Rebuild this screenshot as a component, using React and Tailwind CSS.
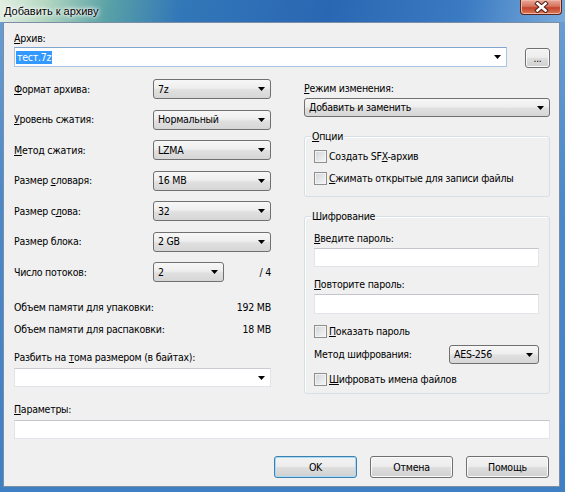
import React from "react";

function Arrow() {
  return (
    <svg width="7" height="4" viewBox="0 0 7 4" className="shrink-0">
      <path d="M0 0H7L3.5 4Z" fill="#000" />
    </svg>
  );
}

function Combo({ className = "", children }) {
  return (
    <div
      className={`flex items-center justify-between pl-[4px] pr-[5px] border border-[#707070] rounded-[3px] bg-[linear-gradient(#f7f7f7,#eeeeee_45%,#e0e0e0_55%,#d6d6d6)] leading-[13px] ${className}`}
    >
      <span>{children}</span>
      <Arrow />
    </div>
  );
}

function Check({ children }) {
  return (
    <div className="flex items-center h-[13px] gap-[2px]">
      <div className="w-[13px] h-[13px] shrink-0 border border-[#8e8f8f] bg-[linear-gradient(135deg,#d2d4d8,#f7f7f7)] shadow-[inset_0_0_0_1px_#f3f3f3]" />
      <span className="leading-[13px]">{children}</span>
    </div>
  );
}

function Field({ className = "" }) {
  return (
    <div
      className={`bg-white border border-[#e2e4ea] border-t-[#c3c6cb] ${className}`}
    />
  );
}

function Btn({ className = "", children }) {
  return (
    <div
      className={`flex items-center justify-center border rounded-[3px] bg-[linear-gradient(#f3f3f3,#ececec_50%,#dedede_51%,#d0d0d0)] leading-[13px] ${className}`}
    >
      {children}
    </div>
  );
}

function Row({ label, children }) {
  return (
    <div className="flex items-center h-[20px]">
      <div className="w-[139px] leading-[13px]">{label}</div>
      {children}
    </div>
  );
}

export default function App() {
  return (
    <div className="w-[565px] h-[492px] flex flex-col overflow-hidden bg-[linear-gradient(180deg,#6a9fd4,#4b89c9_40%,#3f7fc4)] font-['DejaVu_Sans_Condensed','Liberation_Sans',Arial,sans-serif] text-[10.5px] tracking-[-0.25px] text-black">
      <div className="h-[22px] shrink-0 flex items-start justify-between bg-[linear-gradient(100deg,#e4efe4_0%,#b5d8c2_8%,#5aa2a6_19%,#3277b8_32%,#2a67b3_58%,#3b7bc2_82%,#79aadb_100%)]">
        <div className="pl-[4px] pt-[4px] font-['Liberation_Sans',Arial,sans-serif] tracking-normal text-[11px] leading-[14px] [text-shadow:0_0_6px_#fff,0_0_4px_#fff,0_0_2px_#fff]">
          Добавить к архиву
        </div>
        <div className="mr-[3px] w-[42px] h-[15px] flex items-center justify-center rounded-b-[4px] border border-t-0 border-[#5a241a] bg-[linear-gradient(#eaa898,#d47460_45%,#c4432c_55%,#d97a56)] shadow-[inset_0_0_0_1px_#f0b6a6]">
          <svg width="15" height="12" viewBox="0 0 15 12">
            <path d="M3.5 2.5L11.5 9.5M11.5 2.5L3.5 9.5" stroke="#4a1a12" strokeWidth="4.4" strokeLinecap="square" />
            <path d="M3.5 2.5L11.5 9.5M11.5 2.5L3.5 9.5" stroke="#fff" strokeWidth="2.6" strokeLinecap="square" />
          </svg>
        </div>
      </div>

      <div className="ml-[3px] w-[557px] h-[465px] shrink-0 bg-[#f0f0f0] border border-[#7b8ea5] flex flex-col pl-[10px] pr-[9px]">
        <div className="mt-[9px] h-[13px] leading-[13px]">
          <u>А</u>рхив:
        </div>
        <div className="mt-[2px] flex items-start justify-between">
          <div className="w-[493px] h-[20px] flex items-center justify-between pl-[1px] pr-[5px] bg-white border border-[#a9c4e2] border-t-[#7fa5cf]">
            <span className="bg-[#3399ff] text-white px-[1px] leading-[13px]">тест.7z</span>
            <Arrow />
          </div>
          <Btn className="mt-[1px] w-[25px] h-[20px] border-[#707070] shadow-[inset_0_0_0_1px_#fbfbfb] text-[10px]">
            ...
          </Btn>
        </div>

        <div className="mt-[11px] flex gap-[33px]">
          <div className="w-[257px] flex flex-col">
            <div className="flex flex-col gap-[10.5px]">
              <Row label={<><u>Ф</u>ормат архива:</>}>
                <Combo className="w-[118px] h-[20px]">7z</Combo>
              </Row>
              <Row label={<><u>У</u>ровень сжатия:</>}>
                <Combo className="w-[118px] h-[20px]">Нормальный</Combo>
              </Row>
              <Row label={<><u>М</u>етод сжатия:</>}>
                <Combo className="w-[118px] h-[20px]">LZMA</Combo>
              </Row>
              <Row label={<>Размер <u>с</u>ловаря:</>}>
                <Combo className="w-[118px] h-[20px]">16 MB</Combo>
              </Row>
              <Row label={<>Размер с<u>л</u>ова:</>}>
                <Combo className="w-[118px] h-[20px]">32</Combo>
              </Row>
              <Row label={<>Размер блока:</>}>
                <Combo className="w-[118px] h-[20px]">2 GB</Combo>
              </Row>
              <Row label={<>Число потоков:</>}>
                <Combo className="w-[71px] h-[20px]">2</Combo>
                <div className="flex-1 text-right leading-[13px]">/ 4</div>
              </Row>
            </div>
            <div className="mt-[19px] h-[13px] leading-[13px] flex justify-between">
              <span>Объем памяти для упаковки:</span>
              <span>192 MB</span>
            </div>
            <div className="mt-[9px] h-[13px] leading-[13px] flex justify-between">
              <span>Объем памяти для распаковки:</span>
              <span>18 MB</span>
            </div>
            <div className="mt-[15px] h-[13px] leading-[13px]">
              Разбить на <u>т</u>ома размером (в байтах):
            </div>
            <div className="mt-[4px] h-[19px] flex items-center justify-end pr-[5px] bg-white border border-[#e2e4ea] border-t-[#c9ccd1]">
              <Arrow />
            </div>
          </div>

          <div className="w-[246px] flex flex-col">
            <div className="mt-[3px] h-[13px] leading-[13px]">
              <u>Р</u>ежим изменения:
            </div>
            <Combo className="mt-[3px] h-[19px]">Добавить и заменить</Combo>

            <div className="relative mt-[19px] h-[61px] border border-[#d5dfe5] rounded-[3px] shadow-[inset_1px_1px_0_#fff] pl-[9px] pt-[13px] flex flex-col gap-[9px]">
              <div className="absolute left-[6px] -top-[7px] px-[1px] bg-[#f0f0f0] leading-[13px]">
                <u>О</u>пции
              </div>
              <Check>Создать SF<u>X</u>-архив</Check>
              <Check><u>С</u>жимать открытые для записи файлы</Check>
            </div>

            <div className="relative mt-[19px] h-[178px] border border-[#d5dfe5] rounded-[3px] shadow-[inset_1px_1px_0_#fff] pl-[9px] pr-[10px] pt-[15px] flex flex-col">
              <div className="absolute left-[6px] -top-[7px] px-[1px] bg-[#f0f0f0] leading-[13px]">
                Шифрование
              </div>
              <div className="h-[13px] leading-[13px]">
                <u>В</u>ведите пароль:
              </div>
              <Field className="mt-[3px] h-[19px]" />
              <div className="mt-[11px] h-[13px] leading-[13px]">
                <u>П</u>овторите пароль:
              </div>
              <Field className="mt-[3px] h-[20px]" />
              <div className="mt-[11px]">
                <Check><u>П</u>оказать пароль</Check>
              </div>
              <div className="mt-[7px] h-[19px] flex items-center justify-between">
                <span className="leading-[13px]">Метод шифрования:</span>
                <Combo className="w-[90px] h-[19px]">AES-256</Combo>
              </div>
              <div className="mt-[9px]">
                <Check><u>Ш</u>ифровать имена файлов</Check>
              </div>
            </div>
          </div>
        </div>

        <div className="mt-[9px] h-[13px] leading-[13px]">
          <u>П</u>араметры:
        </div>
        <Field className="mt-[4px] h-[19px]" />

        <div className="mt-[17px] flex justify-end gap-[13px] pr-[1px]">
          <Btn className="w-[83px] h-[22px] border-[#3c7fb1] shadow-[inset_0_0_0_1px_#a9daf3]">OK</Btn>
          <Btn className="w-[83px] h-[22px] border-[#707070] shadow-[inset_0_0_0_1px_#fbfbfb]">Отмена</Btn>
          <Btn className="w-[83px] h-[22px] border-[#707070] shadow-[inset_0_0_0_1px_#fbfbfb]">Помощь</Btn>
        </div>
      </div>
    </div>
  );
}
